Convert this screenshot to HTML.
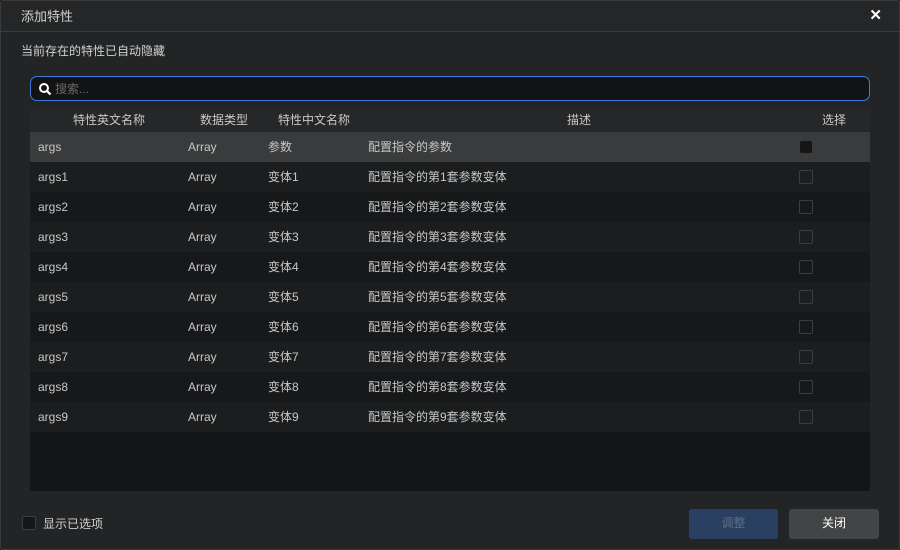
<!DOCTYPE html>
<html><head><meta charset="utf-8"><style>
*{margin:0;padding:0;box-sizing:border-box}
body{width:900px;height:550px;background:#1a1a1a;font-family:"Liberation Sans","Noto Sans CJK SC",sans-serif;font-size:12px;color:#c8c8c8;overflow:hidden;position:relative}
span,div{line-height:14px}
.dlg{position:absolute;left:0;top:0;width:900px;height:550px;background:#232425;box-shadow:inset 0 0 0 1px #3a3a3a;border-radius:3px}
.title{position:absolute;left:1px;top:1px;width:898px;height:31px;border-bottom:1px solid #3a3b3c;background:#252627}
.title span{position:absolute;left:20px;top:9px;font-size:13px;color:#d0d0d0}
.x{position:absolute;right:17px;top:8px;font-size:15px;color:#fff;font-weight:bold}
.hint{position:absolute;left:21px;top:44px;color:#d0d0d0}
.search{position:absolute;left:30px;top:76px;width:840px;height:25px;border:1px solid #3b7ddd;border-radius:7px;background:#121314}
.search span{position:absolute;left:24px;top:5px;color:#6a6a6a}
.tbl{position:absolute;left:30px;top:108px;width:840px;height:383px;background:#141516}
.hd{height:24px;background:#262728;position:relative;color:#c8c8c8}
.row{height:30px;position:relative}
.c{position:absolute;top:8px}
.hd .c{top:5px}
.cb{position:absolute;left:769px;top:8px;width:14px;height:14px;border:1px solid #3c3d3e;border-radius:2px}
.btn{position:absolute;top:509px;height:30px;border-radius:3px;text-align:center;line-height:30px}
</style></head><body>
<div class="dlg">
<div class="title"><span>添加特性</span><div class="x">✕</div></div>
<div class="hint">当前存在的特性已自动隐藏</div>
<div class="search"><svg style="position:absolute;left:7px;top:5px" width="14" height="14" viewBox="0 0 14 14"><circle cx="6" cy="6" r="4" fill="none" stroke="#fff" stroke-width="2"/><line x1="9" y1="9" x2="12.5" y2="12.5" stroke="#fff" stroke-width="2.2"/></svg><span>搜索...</span></div>
<div class="tbl">
<div class="hd"><span class="c" style="left:43px">特性英文名称</span><span class="c" style="left:170px">数据类型</span><span class="c" style="left:248px">特性中文名称</span><span class="c" style="left:537px">描述</span><span class="c" style="left:792px">选择</span></div>
<div class="row" style="background:#3a3b3c"><span class="c" style="left:8px">args</span><span class="c" style="left:158px">Array</span><span class="c" style="left:238px">参数</span><span class="c" style="left:338px">配置指令的参数</span><div class="cb" style="background:#151515;border-color:#151515;left:770px;top:9px;width:12px;height:12px"></div></div>
<div class="row" style="background:#1c1d1e"><span class="c" style="left:8px">args1</span><span class="c" style="left:158px">Array</span><span class="c" style="left:238px">变体1</span><span class="c" style="left:338px">配置指令的第1套参数变体</span><div class="cb"></div></div>
<div class="row" style="background:#17181a"><span class="c" style="left:8px">args2</span><span class="c" style="left:158px">Array</span><span class="c" style="left:238px">变体2</span><span class="c" style="left:338px">配置指令的第2套参数变体</span><div class="cb"></div></div>
<div class="row" style="background:#1c1d1e"><span class="c" style="left:8px">args3</span><span class="c" style="left:158px">Array</span><span class="c" style="left:238px">变体3</span><span class="c" style="left:338px">配置指令的第3套参数变体</span><div class="cb"></div></div>
<div class="row" style="background:#17181a"><span class="c" style="left:8px">args4</span><span class="c" style="left:158px">Array</span><span class="c" style="left:238px">变体4</span><span class="c" style="left:338px">配置指令的第4套参数变体</span><div class="cb"></div></div>
<div class="row" style="background:#1c1d1e"><span class="c" style="left:8px">args5</span><span class="c" style="left:158px">Array</span><span class="c" style="left:238px">变体5</span><span class="c" style="left:338px">配置指令的第5套参数变体</span><div class="cb"></div></div>
<div class="row" style="background:#17181a"><span class="c" style="left:8px">args6</span><span class="c" style="left:158px">Array</span><span class="c" style="left:238px">变体6</span><span class="c" style="left:338px">配置指令的第6套参数变体</span><div class="cb"></div></div>
<div class="row" style="background:#1c1d1e"><span class="c" style="left:8px">args7</span><span class="c" style="left:158px">Array</span><span class="c" style="left:238px">变体7</span><span class="c" style="left:338px">配置指令的第7套参数变体</span><div class="cb"></div></div>
<div class="row" style="background:#17181a"><span class="c" style="left:8px">args8</span><span class="c" style="left:158px">Array</span><span class="c" style="left:238px">变体8</span><span class="c" style="left:338px">配置指令的第8套参数变体</span><div class="cb"></div></div>
<div class="row" style="background:#1c1d1e"><span class="c" style="left:8px">args9</span><span class="c" style="left:158px">Array</span><span class="c" style="left:238px">变体9</span><span class="c" style="left:338px">配置指令的第9套参数变体</span><div class="cb"></div></div>
</div>
<div style="position:absolute;left:22px;top:516px;width:14px;height:14px;border:1px solid #3c3d3e;border-radius:2px;background:#151617"></div>
<div style="position:absolute;left:43px;top:517px;color:#d0d0d0">显示已选项</div>
<div class="btn" style="left:689px;width:89px;background:#2a4063;color:#5e6d84;line-height:28px">调整</div>
<div class="btn" style="left:789px;width:90px;background:#434445;color:#fff;line-height:28px">关闭</div>
</div>
</body></html>
